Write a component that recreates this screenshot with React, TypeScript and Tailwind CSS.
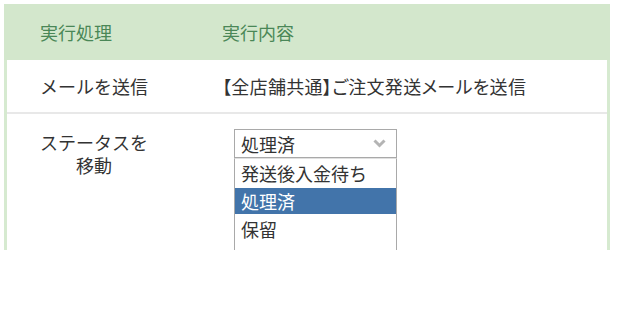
import React from "react";

const font = { fontFamily: '"Noto Sans CJK JP", "Noto Sans", sans-serif' };

function Chevron() {
  return (
    <svg width="13" height="9" viewBox="0 0 13 9" className="block">
      <polyline points="1.5,1.5 6.5,6.5 11.5,1.5" fill="none" stroke="#b4b4b4" strokeWidth="3" />
    </svg>
  );
}

export default function App() {
  return (
    <div className="w-[617px] h-[318px] bg-white" style={font}>
      <div className="h-[250px] overflow-hidden pt-[4px] pl-[4px]">
        <div className="w-[606px] h-full flex flex-col">
          <div className="h-[56px] bg-[#d3e7cc] flex items-center text-[18px] text-[#4a8757] shrink-0">
            <div className="w-[218px] pl-[36px]">実行処理</div>
            <div>実行内容</div>
          </div>
          <div className="flex-1 border-l-[3px] border-r-[3px] border-[#d6ead0] flex flex-col text-[18px] text-[#333]">
            <div className="h-[54px] flex items-center border-b-2 border-[#e8e8e8] shrink-0">
              <div className="w-[215px] pl-[33px] shrink-0">
                <div className="w-[108px] text-center">メールを送信</div>
              </div>
              <div className="[font-feature-settings:'palt'] tracking-[0.3px]">【全店舗共通】ご注文発送メールを送信</div>
            </div>
            <div className="flex-1 flex pt-[15px]">
              <div className="w-[215px] pl-[33px] shrink-0">
                <div className="w-[108px] text-center leading-[23px] pt-[2px]">ステータスを移動</div>
              </div>
              <div className="pl-[12px] flex flex-col">
                <div className="w-[163px] h-[29px] border border-[#a9a9a9] bg-white flex items-center justify-between pl-[6px] pr-[10px]">
                  <span className="leading-none">処理済</span>
                  <Chevron />
                </div>
                <div className="w-[163px] flex-1 border-x border-[#a9a9a9] border-t border-t-[#e0e0e0] flex flex-col">
                  <div className="h-[29px] pl-[6px] flex items-center">発送後入金待ち</div>
                  <div className="h-[26px] pl-[6px] flex items-center bg-[#4274aa] text-white">処理済</div>
                  <div className="h-[30px] pl-[6px] flex items-center">保留</div>
                </div>
              </div>
            </div>
          </div>
        </div>
      </div>
    </div>
  );
}
